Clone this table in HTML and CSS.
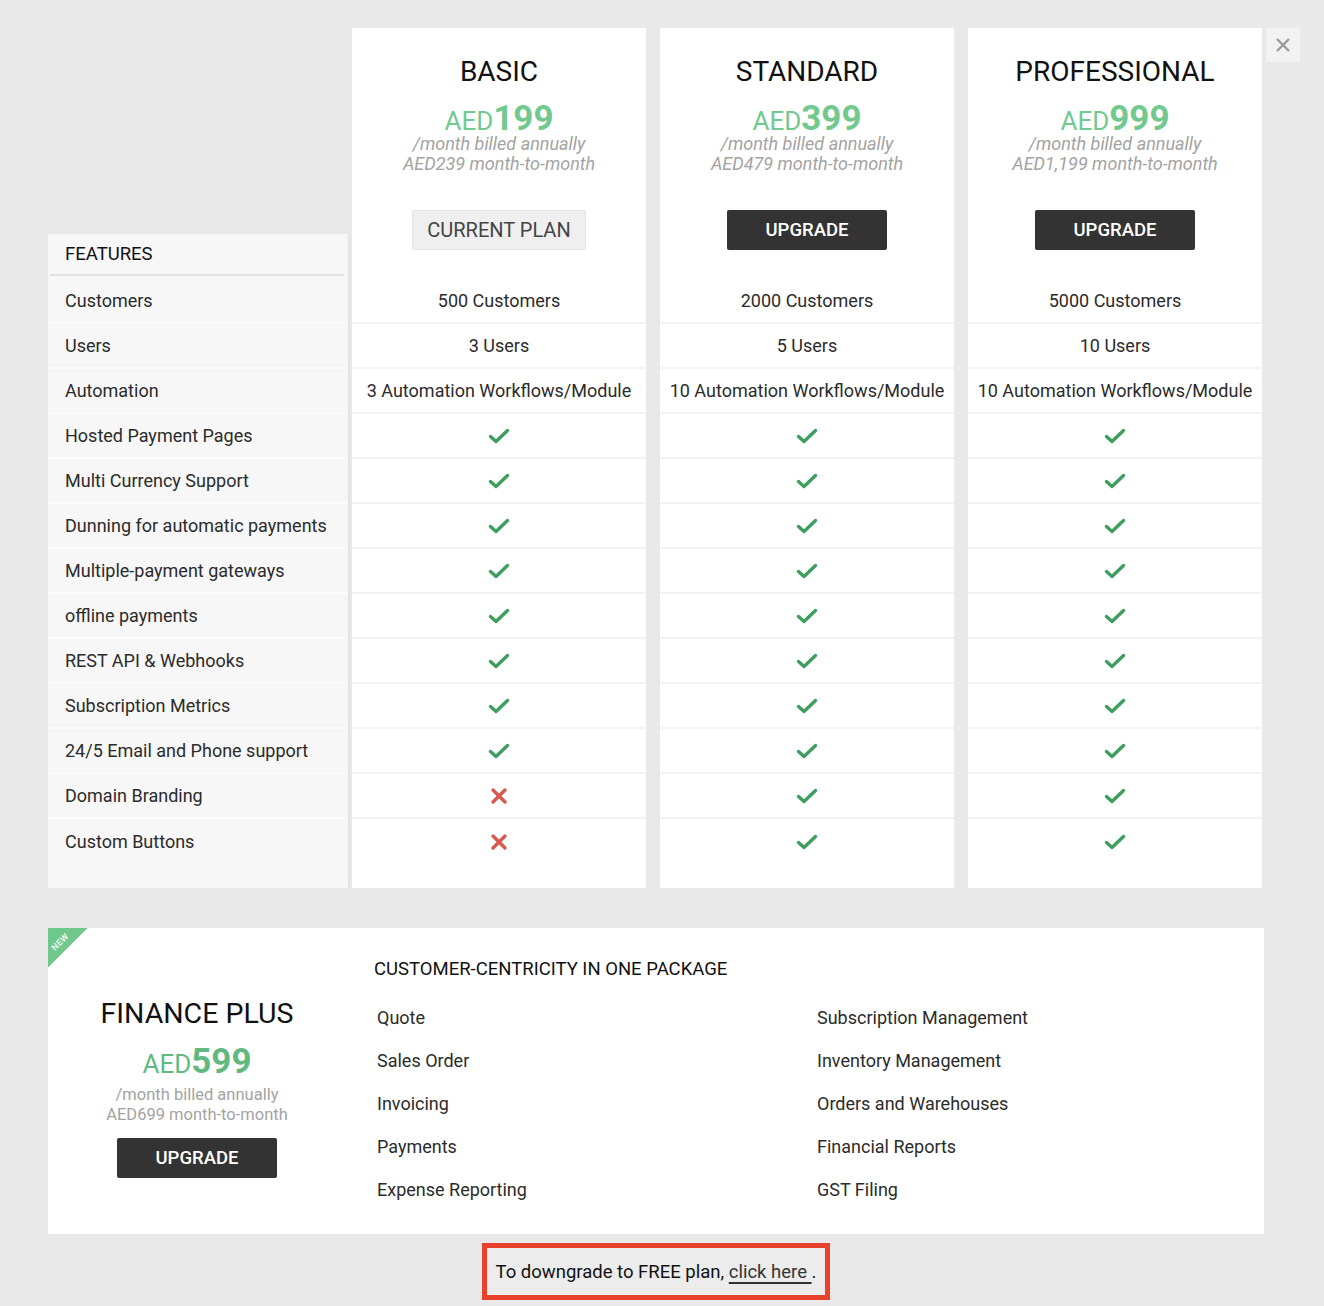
FILE: index.html
```html
<!DOCTYPE html>
<html>
<head>
<meta charset="utf-8">
<link rel="stylesheet" href="styles.css">
</head>
<body>
<div class="page">
  <div class="top">
    <div class="features">
      <div class="features-head">FEATURES</div>
      <div class="frow">Customers</div>
      <div class="frow">Users</div>
      <div class="frow">Automation</div>
      <div class="frow">Hosted Payment Pages</div>
      <div class="frow">Multi Currency Support</div>
      <div class="frow">Dunning for automatic payments</div>
      <div class="frow">Multiple-payment gateways</div>
      <div class="frow">offline payments</div>
      <div class="frow">REST API &amp; Webhooks</div>
      <div class="frow">Subscription Metrics</div>
      <div class="frow">24/5 Email and Phone support</div>
      <div class="frow">Domain Branding</div>
      <div class="frow">Custom Buttons</div>
    </div>

    <div class="plan">
      <div class="plan-head">
        <div class="plan-name">BASIC</div>
        <div class="price"><span class="cur">AED</span><span class="amt">199</span></div>
        <div class="billed">/month billed annually</div>
        <div class="billed">AED239 month-to-month</div>
        <button class="btn-current">CURRENT PLAN</button>
      </div>
      <div class="prow">500 Customers</div>
      <div class="prow">3 Users</div>
      <div class="prow">3 Automation Workflows/Module</div>
      <div class="prow"><svg class="ok" viewBox="0 0 22 16"><path d="M2.5 8.5 L8 13.5 L19.5 2.5"/></svg></div>
      <div class="prow"><svg class="ok" viewBox="0 0 22 16"><path d="M2.5 8.5 L8 13.5 L19.5 2.5"/></svg></div>
      <div class="prow"><svg class="ok" viewBox="0 0 22 16"><path d="M2.5 8.5 L8 13.5 L19.5 2.5"/></svg></div>
      <div class="prow"><svg class="ok" viewBox="0 0 22 16"><path d="M2.5 8.5 L8 13.5 L19.5 2.5"/></svg></div>
      <div class="prow"><svg class="ok" viewBox="0 0 22 16"><path d="M2.5 8.5 L8 13.5 L19.5 2.5"/></svg></div>
      <div class="prow"><svg class="ok" viewBox="0 0 22 16"><path d="M2.5 8.5 L8 13.5 L19.5 2.5"/></svg></div>
      <div class="prow"><svg class="ok" viewBox="0 0 22 16"><path d="M2.5 8.5 L8 13.5 L19.5 2.5"/></svg></div>
      <div class="prow"><svg class="ok" viewBox="0 0 22 16"><path d="M2.5 8.5 L8 13.5 L19.5 2.5"/></svg></div>
      <div class="prow"><svg class="no" viewBox="0 0 18 18"><path d="M3 3 L15 15 M15 3 L3 15"/></svg></div>
      <div class="prow"><svg class="no" viewBox="0 0 18 18"><path d="M3 3 L15 15 M15 3 L3 15"/></svg></div>
    </div>

    <div class="plan">
      <div class="plan-head">
        <div class="plan-name">STANDARD</div>
        <div class="price"><span class="cur">AED</span><span class="amt">399</span></div>
        <div class="billed">/month billed annually</div>
        <div class="billed">AED479 month-to-month</div>
        <button class="btn-dark">UPGRADE</button>
      </div>
      <div class="prow">2000 Customers</div>
      <div class="prow">5 Users</div>
      <div class="prow">10 Automation Workflows/Module</div>
      <div class="prow"><svg class="ok" viewBox="0 0 22 16"><path d="M2.5 8.5 L8 13.5 L19.5 2.5"/></svg></div>
      <div class="prow"><svg class="ok" viewBox="0 0 22 16"><path d="M2.5 8.5 L8 13.5 L19.5 2.5"/></svg></div>
      <div class="prow"><svg class="ok" viewBox="0 0 22 16"><path d="M2.5 8.5 L8 13.5 L19.5 2.5"/></svg></div>
      <div class="prow"><svg class="ok" viewBox="0 0 22 16"><path d="M2.5 8.5 L8 13.5 L19.5 2.5"/></svg></div>
      <div class="prow"><svg class="ok" viewBox="0 0 22 16"><path d="M2.5 8.5 L8 13.5 L19.5 2.5"/></svg></div>
      <div class="prow"><svg class="ok" viewBox="0 0 22 16"><path d="M2.5 8.5 L8 13.5 L19.5 2.5"/></svg></div>
      <div class="prow"><svg class="ok" viewBox="0 0 22 16"><path d="M2.5 8.5 L8 13.5 L19.5 2.5"/></svg></div>
      <div class="prow"><svg class="ok" viewBox="0 0 22 16"><path d="M2.5 8.5 L8 13.5 L19.5 2.5"/></svg></div>
      <div class="prow"><svg class="ok" viewBox="0 0 22 16"><path d="M2.5 8.5 L8 13.5 L19.5 2.5"/></svg></div>
      <div class="prow"><svg class="ok" viewBox="0 0 22 16"><path d="M2.5 8.5 L8 13.5 L19.5 2.5"/></svg></div>
    </div>

    <div class="plan">
      <div class="plan-head">
        <div class="plan-name">PROFESSIONAL</div>
        <div class="price"><span class="cur">AED</span><span class="amt">999</span></div>
        <div class="billed">/month billed annually</div>
        <div class="billed">AED1,199 month-to-month</div>
        <button class="btn-dark">UPGRADE</button>
      </div>
      <div class="prow">5000 Customers</div>
      <div class="prow">10 Users</div>
      <div class="prow">10 Automation Workflows/Module</div>
      <div class="prow"><svg class="ok" viewBox="0 0 22 16"><path d="M2.5 8.5 L8 13.5 L19.5 2.5"/></svg></div>
      <div class="prow"><svg class="ok" viewBox="0 0 22 16"><path d="M2.5 8.5 L8 13.5 L19.5 2.5"/></svg></div>
      <div class="prow"><svg class="ok" viewBox="0 0 22 16"><path d="M2.5 8.5 L8 13.5 L19.5 2.5"/></svg></div>
      <div class="prow"><svg class="ok" viewBox="0 0 22 16"><path d="M2.5 8.5 L8 13.5 L19.5 2.5"/></svg></div>
      <div class="prow"><svg class="ok" viewBox="0 0 22 16"><path d="M2.5 8.5 L8 13.5 L19.5 2.5"/></svg></div>
      <div class="prow"><svg class="ok" viewBox="0 0 22 16"><path d="M2.5 8.5 L8 13.5 L19.5 2.5"/></svg></div>
      <div class="prow"><svg class="ok" viewBox="0 0 22 16"><path d="M2.5 8.5 L8 13.5 L19.5 2.5"/></svg></div>
      <div class="prow"><svg class="ok" viewBox="0 0 22 16"><path d="M2.5 8.5 L8 13.5 L19.5 2.5"/></svg></div>
      <div class="prow"><svg class="ok" viewBox="0 0 22 16"><path d="M2.5 8.5 L8 13.5 L19.5 2.5"/></svg></div>
      <div class="prow"><svg class="ok" viewBox="0 0 22 16"><path d="M2.5 8.5 L8 13.5 L19.5 2.5"/></svg></div>
    </div>

    <div class="close"><svg viewBox="0 0 16 16"><path d="M2 2 L14 14 M14 2 L2 14"/></svg></div>
  </div>

  <div class="finance">
    <div class="ribbon"><span>NEW</span></div>
    <div class="fin-left">
      <div class="fin-name">FINANCE PLUS</div>
      <div class="fin-price"><span class="cur">AED</span><span class="amt">599</span></div>
      <div class="fin-billed fin-billed-first">/month billed annually</div>
      <div class="fin-billed">AED699 month-to-month</div>
      <button class="btn-dark fin-btn">UPGRADE</button>
    </div>
    <div class="fin-right">
      <div class="fin-title">CUSTOMER-CENTRICITY IN ONE PACKAGE</div>
      <div class="fin-list">
        <div>Quote</div><div>Subscription Management</div>
        <div>Sales Order</div><div>Inventory Management</div>
        <div>Invoicing</div><div>Orders and Warehouses</div>
        <div>Payments</div><div>Financial Reports</div>
        <div>Expense Reporting</div><div>GST Filing</div>
      </div>
    </div>
  </div>

  <div class="downgrade-wrap">
    <div class="downgrade">To downgrade to FREE plan,&nbsp;<a href="#">click here&nbsp;</a>.</div>
  </div>
</div>
</body>
</html>
```

FILE: styles.css
```css
* { box-sizing: border-box; }
html, body {
  margin: 0;
  padding: 0;
  background: #e9e9e9;
  font-family: Roboto, "Liberation Sans", Arial, sans-serif;
  color: #111;
}
.page {
  padding: 28px 0 0 48px;
  width: 1324px;
}
.top {
  display: flex;
  align-items: stretch;
}
.features {
  width: 300px;
  margin-top: 206px;
  background: #f7f7f7;
  margin-right: 4px;
  box-shadow: 2px 0 3px rgba(0,0,0,0.03);
}
.features-head {
  height: 42px;
  margin: 0 4px 3px 2px;
  padding: 9px 0 0 15px;
  font-size: 18.5px;
  line-height: 22px;
  font-weight: 400;
  color: #111;
  border-bottom: 2px solid #e2e2e2;
}
.frow {
  height: 45px;
  padding: 0 0 0 17px;
  display: flex;
  align-items: center;
  font-size: 18px;
  font-weight: 400;
  color: #2b2b2b;
  border-bottom: 2px solid #fbfbfb;
}
.frow:last-child { border-bottom: none; }

.plan {
  width: 294px;
  background: #fff;
  margin-right: 14px;
  padding-bottom: 24px;
}
.plan-head {
  height: 251px;
  padding-top: 27px;
  display: flex;
  flex-direction: column;
  align-items: center;
}
.plan-name {
  font-size: 28px;
  line-height: 34px;
  font-weight: 400;
  color: #111;
}
.price {
  margin-top: 13px;
  line-height: 34px;
  height: 32px;
  color: #72c98f;
  display: flex;
  align-items: baseline;
}
.cur { font-size: 26px; font-weight: 400; }
.amt { font-size: 35px; font-weight: 700; }
.billed {
  font-size: 18px;
  line-height: 20px;
  font-style: italic;
  font-weight: 400;
  color: #a3a3a3;
}
.btn-current, .btn-dark {
  font-family: Roboto, "Liberation Sans", Arial, sans-serif;
  border-radius: 2px;
  height: 40px;
  margin-top: 36px;
  cursor: pointer;
}
.btn-current {
  width: 174px;
  background: #efefef;
  border: 1px solid #e6e6e6;
  color: #444;
  font-size: 20px;
  font-weight: 400;
}
.btn-dark {
  width: 160px;
  background: #333;
  border: none;
  color: #fff;
  font-size: 18.5px;
  font-weight: 500;
}
.prow {
  height: 45px;
  display: flex;
  align-items: center;
  justify-content: center;
  font-size: 18px;
  font-weight: 400;
  color: #2b2b2b;
  border-bottom: 2px solid #f3f3f3;
  white-space: nowrap;
}
.prow:last-child { border-bottom: none; }
.ok {
  width: 22px;
  height: 16px;
  fill: none;
  stroke: #3e9e5f;
  stroke-width: 3.4;
  stroke-linecap: round;
  stroke-linejoin: round;
}
.no {
  width: 18px;
  height: 18px;
  fill: none;
  stroke: #d9574c;
  stroke-width: 3.4;
  stroke-linecap: round;
}
.close {
  width: 34px;
  height: 34px;
  margin-left: -10px;
  background: #f2f2f2;
  display: flex;
  align-items: center;
  justify-content: center;
}
.close svg {
  width: 16px;
  height: 16px;
  fill: none;
  stroke: #9a9a9a;
  stroke-width: 2.4;
}

.finance {
  position: relative;
  margin-top: 40px;
  width: 1216px;
  height: 306px;
  background: #fff;
  display: flex;
  overflow: hidden;
}
.ribbon {
  position: absolute;
  left: 0;
  top: 0;
  width: 40px;
  height: 40px;
  background: linear-gradient(135deg, #6fc98c 50%, transparent 50%);
}
.ribbon span {
  position: absolute;
  left: 2px;
  top: 9px;
  font-size: 9px;
  font-weight: 700;
  color: rgba(255,255,255,0.85);
  transform: rotate(-45deg);
  letter-spacing: 0.3px;
}
.fin-left {
  width: 298px;
  padding-top: 69px;
  display: flex;
  flex-direction: column;
  align-items: center;
}
.fin-name {
  font-size: 28.5px;
  line-height: 34px;
  font-weight: 400;
  color: #111;
}
.fin-price {
  margin-top: 13px;
  height: 36px;
  line-height: 36px;
  color: #62b97f;
  display: flex;
  align-items: baseline;
}
.fin-billed {
  font-size: 16.5px;
  line-height: 20px;
  color: #a3a3a3;
  font-weight: 400;
}
.fin-billed-first { margin-top: 5px; }
.fin-btn { margin-top: 13px; }
.fin-right {
  padding: 30px 0 0 28px;
}
.fin-title {
  font-size: 18.5px;
  line-height: 22px;
  font-weight: 400;
  color: #111;
}
.fin-list {
  margin-top: 16px;
  margin-left: 3px;
  display: grid;
  grid-template-columns: 440px 400px;
  grid-auto-rows: 43px;
  align-items: center;
  font-size: 18px;
  font-weight: 400;
  color: #2b2b2b;
}
.downgrade-wrap {
  width: 1216px;
  display: flex;
  justify-content: center;
  margin-top: 9px;
}
.downgrade {
  width: 348px;
  height: 57px;
  border: 5px solid #e8412c;
  background: #ececec;
  display: flex;
  align-items: center;
  justify-content: center;
  font-size: 18.5px;
  font-weight: 400;
  color: #111;
}
.downgrade a {
  color: #333;
  text-decoration: underline;
  text-decoration-thickness: 2px;
  text-underline-offset: 4px;
}
```
